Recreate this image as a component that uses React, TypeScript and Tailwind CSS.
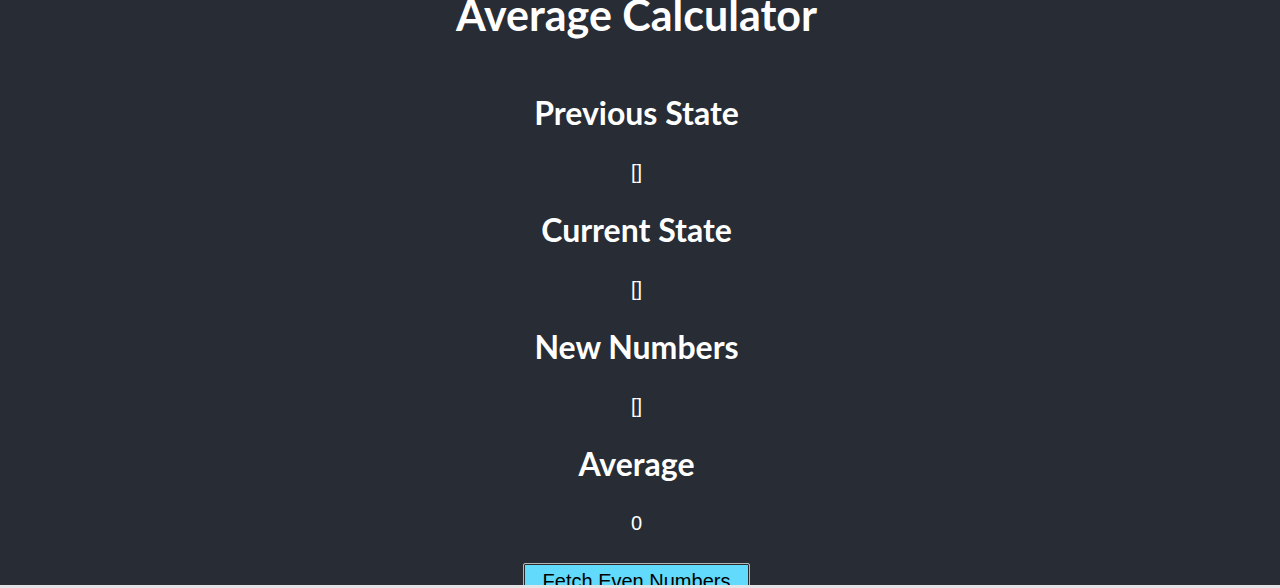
export default function App() {
  const sections = [
    { title: 'Previous State', value: '[]' },
    { title: 'Current State', value: '[]' },
    { title: 'New Numbers', value: '[]' },
    { title: 'Average', value: '0' },
  ];

  return (
    <div className="h-[588px] w-full flex flex-col overflow-hidden">
      <div className="flex-1 overflow-hidden bg-[#282c34] text-white pr-[7px]">
        <div className="flex flex-col items-center">
          <h1 className="mt-[-9px] h-[48px] leading-[48px] text-[43px] font-bold font-['Lato',sans-serif]">
            Average Calculator
          </h1>

          <div className="mt-[54px] flex flex-col items-center gap-[26.5px]">
            {sections.map((s) => (
              <div key={s.title} className="flex flex-col items-center gap-[26.5px]">
                <h2 className="h-[40px] leading-[40px] text-[32px] font-bold font-['Lato',sans-serif]">
                  {s.title}
                </h2>
                <p className="h-[24px] leading-[24px] text-[20px] font-['Liberation_Sans',Arial,sans-serif]">
                  {s.value}
                </p>
              </div>
            ))}
            <button className="mt-[1.5px] w-[227px] h-[36px] bg-[#61dafb] border border-[#b5b5b5] shadow-[inset_0_0_0_1px_#2a2a2a] rounded-[2px] text-black text-[20px] leading-[24px] font-['Liberation_Sans',Arial,sans-serif]">
              Fetch Even Numbers
            </button>
          </div>
        </div>
      </div>
      <div className="h-[3px] bg-[#e6e3e6]" />
    </div>
  );
}
